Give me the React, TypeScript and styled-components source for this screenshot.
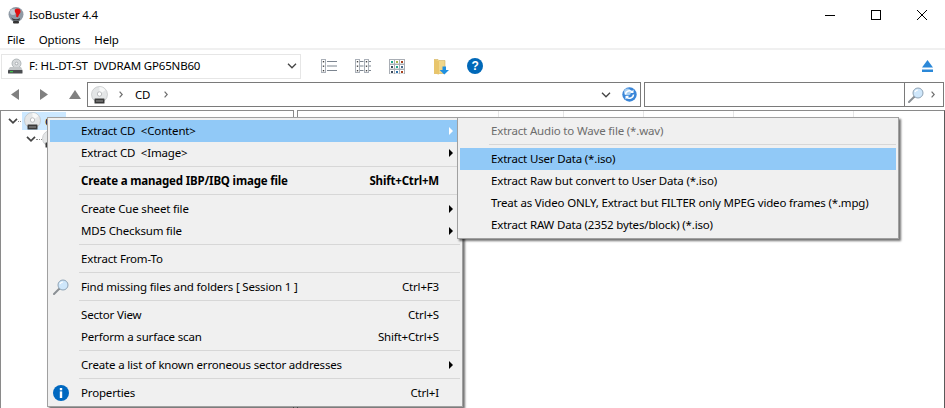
import styled, { createGlobalStyle } from "styled-components";

const GlobalStyle = createGlobalStyle`
  html, body { margin: 0; padding: 0; background: #fff; }
  body { font-family: "Noto Sans", "Open Sans", sans-serif; font-size: 11.5px; letter-spacing: -0.17px; color: #000; }
`;

// ── Window chrome ────────────────────────────────────────────────────────────

const Window = styled.div`
  position: relative;
  width: 945px;
  height: 408px;
  overflow: hidden;
  background: #fff;
  display: flex;
  flex-direction: column;
`;

const TitleBar = styled.div`
  height: 29px;
  display: flex;
  align-items: center;
  padding-left: 8px;
  flex-shrink: 0;
`;

const TitleText = styled.span`
  margin-left: 5px;
  flex: 1;
`;

const WinButton = styled.div`
  width: 46px;
  height: 29px;
  display: flex;
  align-items: center;
  justify-content: center;
`;

const MenuBar = styled.div`
  height: 21px;
  padding: 1px 0 0 7px;
  box-sizing: border-box;
  display: flex;
  align-items: center;
  gap: 14px;
  flex-shrink: 0;
  border-bottom: 2px solid #f0f0f0;
`;

const Toolbar = styled.div`
  height: 32px;
  display: flex;
  align-items: center;
  flex-shrink: 0;
  padding-left: 1px;
`;

const Combo = styled.div`
  width: 300px;
  height: 25px;
  box-sizing: border-box;
  border: 1px solid #e6e6e6;
  display: flex;
  align-items: center;
  padding: 0 3px 0 5px;
  gap: 6px;
  white-space: pre;
`;

const ComboText = styled.span`
  flex: 1;
  padding-bottom: 1px;
`;

const ToolIcons = styled.div`
  display: flex;
  align-items: center;
  margin-left: 20px;
`;

const ToolSlot = styled.div<{ $w: number }>`
  width: ${({ $w }) => $w}px;
  display: flex;
  align-items: center;
`;

const EjectSlot = styled.div`
  margin-left: auto;
  margin-right: 12px;
  display: flex;
`;

const AddressRow = styled.div`
  height: 25px;
  display: flex;
  align-items: stretch;
  flex-shrink: 0;
`;

const NavGroup = styled.div`
  width: 87px;
  display: flex;
  align-items: center;
  padding-left: 11px;
  box-sizing: border-box;
  gap: 21px;
`;

const AddressBox = styled.div`
  width: 554px;
  box-sizing: border-box;
  border: 1px solid #7a7a7a;
  display: flex;
  align-items: center;
  padding-left: 3px;
`;

const Crumb = styled.span<{ $lead?: boolean }>`
  display: flex;
  margin: 0 12px 0 ${({ $lead }) => ($lead ? 11 : 14)}px;
`;

const CrumbText = styled.span`
  padding-bottom: 1px;
`;

const AddressEnd = styled.div`
  margin-left: auto;
  margin-right: 3px;
  display: flex;
  align-items: center;
  gap: 11px;
`;

const SearchBox = styled.div`
  margin-left: 3px;
  width: 300px;
  box-sizing: border-box;
  border: 1px solid #7a7a7a;
  display: flex;
  justify-content: flex-end;
`;

const SearchTools = styled.div`
  width: 39px;
  border-left: 1px solid #7a7a7a;
  display: flex;
  align-items: center;
  padding-left: 3px;
  gap: 7px;
  box-sizing: border-box;
`;

// ── Panes ────────────────────────────────────────────────────────────────────

const Panes = styled.div`
  flex: 1;
  margin-top: 3px;
  display: flex;
  gap: 3px;
  min-height: 0;
`;

const TreePane = styled.div`
  width: 294px;
  box-sizing: border-box;
  border: 1px solid #8a8a8a;
  border-bottom: none;
  padding: 1px 0 0 7px;
`;

const TreeRow = styled.div<{ $indent?: number }>`
  height: 18px;
  display: flex;
  align-items: center;
  padding-left: ${({ $indent }) => $indent ?? 0}px;
`;

const TreeChevron = styled.div`
  width: 10px;
  display: flex;
  align-items: center;
`;

const TreeDots = styled.div<{ $w: number }>`
  width: ${({ $w }) => $w}px;
  border-top: 1px dotted #8a8a8a;
  margin-top: 1px;
`;

const TreeLabel = styled.div`
  display: flex;
  align-items: center;
  gap: 4px;
  height: 18px;
  padding: 0 6px 0 2px;
  background: #cce8ff;
  margin-left: 1px;
`;

const ListPane = styled.div`
  flex: 1;
  border-top: 1px solid #8a8a8a;
  border-right: 1px solid #5a5a5a;
  border-left: 1px solid #8a8a8a;
`;

const ColumnHeader = styled.div`
  display: flex;
  height: 20px;
`;

const Column = styled.div<{ $w: number }>`
  width: ${({ $w }) => $w}px;
  border-right: 1px solid #e5e5e5;
  box-sizing: border-box;
`;

// ── Context menus ────────────────────────────────────────────────────────────

const Popup = styled.div`
  position: absolute;
  box-sizing: border-box;
  background: #f0f0f0;
  border: 1px solid #a0a0a0;
  padding: 2px;
  box-shadow: 2px 2px 2px rgba(0, 0, 0, 0.55);
`;

const MainMenu = styled(Popup)`
  left: 47px;
  top: 117px;
  width: 416px;
  height: 290px;
`;

const SubMenu = styled(Popup)`
  left: 409px;
  top: -1px;
  width: 442px;
  height: 122px;
`;

const Item = styled.div<{ $active?: boolean; $disabled?: boolean; $bold?: boolean }>`
  height: 22px;
  display: flex;
  align-items: center;
  background: ${({ $active }) => ($active ? "#91c9f7" : "transparent")};
  color: ${({ $disabled }) => ($disabled ? "#6d6d6d" : "#000")};
  font-weight: ${({ $bold }) => ($bold ? 700 : 400)};
  white-space: pre;
`;

const Gutter = styled.div`
  width: 31px;
  flex-shrink: 0;
  display: flex;
  align-items: center;
  padding-left: 3px;
  box-sizing: border-box;
`;

const Label = styled.span`
  flex: 1;
  padding-bottom: 2px;
`;

const Shortcut = styled.span`
  margin-right: 21px;
  padding-bottom: 2px;
`;

const Arrow = styled.span<{ $light?: boolean }>`
  width: 0;
  height: 0;
  margin-right: 7px;
  border-top: 4px solid transparent;
  border-bottom: 4px solid transparent;
  border-left: 4px solid ${({ $light }) => ($light ? "#fff" : "#000")};
`;

const Separator = styled.div`
  height: 6px;
  margin-left: 29px;
  box-sizing: border-box;
  padding-top: 2px;
  &::before {
    content: "";
    display: block;
    height: 1px;
    background: #d7d7d7;
  }
`;

// ── Icons ────────────────────────────────────────────────────────────────────

const Logo = () => (
  <svg width="16" height="18" viewBox="0 0 16 18">
    <circle cx="8" cy="8.5" r="7.5" fill="#8f9aa5" />
    <circle cx="5" cy="6" r="3" fill="#c4ccd4" />
    <path d="M7 3.5c2-1.8 5-1 5.5 1.2.4 1.8-1 3.2-1.6 4.2l-1 2.3-1.8-.4.2-2.4C7.6 7.2 6 5 7 3.5z" fill="#e01010" />
    <path d="M3 11c2 2.5 6 3 9 1l-.6 2.5H5z" fill="#3c3c3c" />
    <rect x="5" y="15" width="6" height="2.5" rx="1" fill="#333" />
  </svg>
);

const Drive = () => (
  <svg width="16" height="16" viewBox="0 0 16 16">
    <ellipse cx="9.5" cy="5.5" rx="4.5" ry="4.5" fill="#d5d8da" stroke="#9aa0a4" strokeWidth="0.7" />
    <circle cx="9.5" cy="5.5" r="1.3" fill="#fff" stroke="#8a8f93" strokeWidth="0.6" />
    <path d="M3 9h11l1.5 3H1z" fill="#c3c6c8" />
    <rect x="1" y="12" width="14.5" height="3.5" rx="0.6" fill="#4a4d50" />
    <rect x="3" y="13" width="3" height="1.3" fill="#3fc24a" />
  </svg>
);

const Disc = () => (
  <svg width="17" height="18" viewBox="0 0 17 18">
    <circle cx="8.5" cy="8.5" r="8" fill="#e4e6e7" stroke="#b5b8ba" strokeWidth="0.6" />
    <path d="M8.5 1a7.5 7.5 0 0 1 6 3L8.5 8.5z" fill="#f7f8f8" />
    <circle cx="8.5" cy="8" r="2.2" fill="#fff" stroke="#a5a8aa" strokeWidth="0.7" />
    <rect x="3.5" y="12.5" width="10" height="5" rx="0.6" fill="#3a3a3a" />
    <rect x="5" y="14.5" width="7" height="1" fill="#9a9a9a" />
  </svg>
);

const Caret = ({ weight = 1.3 }: { weight?: number }) => (
  <svg width="10" height="6" viewBox="0 0 10 6">
    <path d="M1 .8 5 4.8 9 .8" fill="none" stroke="#444" strokeWidth={weight} />
  </svg>
);

const Crumbs = () => (
  <svg width="4" height="7" viewBox="0 0 4 7">
    <path d="M.6.6 3.2 3.5.6 6.4" fill="none" stroke="#6e6e6e" strokeWidth="1.2" />
  </svg>
);

const Back = () => (
  <svg width="8" height="11" viewBox="0 0 8 11"><path d="M8 0v11L0 5.5z" fill="#808080" /></svg>
);
const Forward = () => (
  <svg width="8" height="11" viewBox="0 0 8 11"><path d="M0 0v11l8-5.5z" fill="#808080" /></svg>
);
const Up = () => (
  <svg width="12" height="9" viewBox="0 0 12 9"><path d="M0 9h12L6 0z" fill="#808080" /></svg>
);

const ListView = () => (
  <svg width="16" height="14" viewBox="0 0 16 14">
    <rect x=".5" y=".5" width="4" height="13" fill="#fff" stroke="#aab0b8" />
    {[2, 6.5, 11].map((y) => (
      <g key={y}>
        <rect x="1.8" y={y} width="1.4" height="1.4" fill="#444" />
        <rect x="6" y={y} width="10" height="1" fill="#7c8590" />
      </g>
    ))}
  </svg>
);

const DetailView = () => (
  <svg width="16" height="14" viewBox="0 0 16 14">
    <rect x=".5" y=".5" width="4" height="13" fill="#fff" stroke="#aab0b8" />
    <rect x="9.5" y=".5" width="4" height="13" fill="#fff" stroke="#aab0b8" />
    {[2, 6.5, 11].map((y) => (
      <g key={y}>
        <rect x="1.8" y={y} width="1.4" height="1.4" fill="#444" />
        <rect x="5" y={y} width="3.5" height="1" fill="#7c8590" />
        <rect x="10.8" y={y} width="1.4" height="1.4" fill="#444" />
        <rect x="14" y={y} width="2" height="1" fill="#7c8590" />
      </g>
    ))}
  </svg>
);

const GRID_COLORS = ["#1fa58c", "#a6b34a", "#a8421f", "#3a4a5c", "#1fa58c", "#4a6a8a", "#3a4a5c", "#2a6fa8", "#a8421f"];

const GridView = () => (
  <svg width="16" height="15" viewBox="0 0 16 15">
    {GRID_COLORS.map((c, i) => (
      <g key={i}>
        <rect x={0.5 + (i % 3) * 5} y={0.5 + Math.floor(i / 3) * 5} width="5" height="4.6" fill="#fff" stroke="#a9aeb5" />
        <rect x={2 + (i % 3) * 5} y={2 + Math.floor(i / 3) * 5} width="2" height="2" fill={c} />
      </g>
    ))}
  </svg>
);

const FolderDown = () => (
  <svg width="16" height="17" viewBox="0 0 16 17">
    <path d="M0 1.5h4l1 1h6v13H0z" fill="#f0d68a" stroke="#d0b060" strokeWidth="0.6" />
    <path d="M0 1.5 5 3v13.5L0 15.5z" fill="#e8c56c" />
    <path d="M8.5 8.5h3.5v3.5h3l-4.7 4.5L5.6 12h2.9z" fill="#1f8fe0" />
  </svg>
);

const Help = () => (
  <svg width="16" height="16" viewBox="0 0 16 16">
    <circle cx="8" cy="8" r="8" fill="#0068b8" />
    <text x="8" y="12.2" textAnchor="middle" fontSize="12" fontWeight="700" fontFamily="Liberation Sans, sans-serif" fill="#fff">?</text>
  </svg>
);

const Eject = () => (
  <svg width="11" height="12" viewBox="0 0 11 12">
    <path d="M0 7.5 5.5 0 11 7.5z" fill="#2b88d8" />
    <rect y="9.5" width="11" height="2.5" fill="#2b88d8" />
  </svg>
);

const Refresh = () => (
  <svg width="15" height="15" viewBox="0 0 15 15">
    <circle cx="7.5" cy="7.5" r="7.2" fill="#3a86d8" />
    <circle cx="5.5" cy="5" r="3.5" fill="#a9cff2" />
    <path d="M3.5 7.5a4 4 0 0 1 7-2.4M11.5 7.5a4 4 0 0 1-7 2.4" fill="none" stroke="#fff" strokeWidth="1.5" />
    <path d="M11.5 2.5v3.5H8zM3.5 12.5V9H7z" fill="#fff" />
  </svg>
);

const Magnifier = () => (
  <svg width="16" height="16" viewBox="0 0 16 16">
    <path d="M6.5 9.5 1 15" stroke="#8a8f94" strokeWidth="2" strokeLinecap="round" />
    <circle cx="10" cy="6" r="5" fill="#cfe7fb" stroke="#8fa3b5" />
    <path d="M7 5a3.2 3.2 0 0 1 3-2" fill="none" stroke="#fff" strokeWidth="1.2" />
  </svg>
);

const Info = () => (
  <svg width="16" height="16" viewBox="0 0 16 16">
    <circle cx="8" cy="8" r="8" fill="#0068c0" />
    <rect x="6.8" y="3" width="2.4" height="2.3" fill="#fff" />
    <rect x="6.8" y="6.4" width="2.4" height="6.6" fill="#fff" />
  </svg>
);

const Minimize = () => (
  <svg width="10" height="10" viewBox="0 0 10 10"><path d="M0 5.5h10" stroke="#000" /></svg>
);
const Maximize = () => (
  <svg width="10" height="10" viewBox="0 0 10 10"><rect x=".5" y=".5" width="9" height="9" fill="none" stroke="#000" /></svg>
);
const Close = () => (
  <svg width="10" height="10" viewBox="0 0 10 10"><path d="M0 0l10 10M10 0 0 10" stroke="#000" /></svg>
);

// ── Data ─────────────────────────────────────────────────────────────────────

const COLUMNS = [201, 65, 80, 90, 120];

export default function App() {
  return (
    <Window>
      <GlobalStyle />

      <TitleBar>
        <Logo />
        <TitleText>IsoBuster 4.4</TitleText>
        <WinButton><Minimize /></WinButton>
        <WinButton><Maximize /></WinButton>
        <WinButton><Close /></WinButton>
      </TitleBar>

      <MenuBar>
        <span>File</span>
        <span>Options</span>
        <span>Help</span>
      </MenuBar>

      <Toolbar>
        <Combo>
          <Drive />
          <ComboText>F: HL-DT-ST  DVDRAM GP65NB60</ComboText>
          <Caret />
        </Combo>
        <ToolIcons>
          <ToolSlot $w={34}><ListView /></ToolSlot>
          <ToolSlot $w={34}><DetailView /></ToolSlot>
          <ToolSlot $w={45}><GridView /></ToolSlot>
          <ToolSlot $w={33}><FolderDown /></ToolSlot>
          <ToolSlot $w={16}><Help /></ToolSlot>
        </ToolIcons>
        <EjectSlot><Eject /></EjectSlot>
      </Toolbar>

      <AddressRow>
        <NavGroup>
          <Back />
          <Forward />
          <Up />
        </NavGroup>
        <AddressBox>
          <Disc />
          <Crumb $lead><Crumbs /></Crumb>
          <CrumbText>CD</CrumbText>
          <Crumb><Crumbs /></Crumb>
          <AddressEnd>
            <Caret />
            <Refresh />
          </AddressEnd>
        </AddressBox>
        <SearchBox>
          <SearchTools>
            <Magnifier />
            <Crumbs />
          </SearchTools>
        </SearchBox>
      </AddressRow>

      <Panes>
        <TreePane>
          <TreeRow>
            <TreeChevron><Caret weight={1.7} /></TreeChevron>
            <TreeDots $w={3} />
            <TreeLabel>
              <Disc />
              <span>CD</span>
            </TreeLabel>
          </TreeRow>
          <TreeRow $indent={18}>
            <TreeChevron><Caret weight={1.7} /></TreeChevron>
            <TreeDots $w={6} />
            <Disc />
          </TreeRow>
        </TreePane>
        <ListPane>
          <ColumnHeader>
            {COLUMNS.map((w) => (
              <Column key={w} $w={w} />
            ))}
          </ColumnHeader>
        </ListPane>
      </Panes>

      <MainMenu>
        <Item $active>
          <Gutter />
          <Label>Extract CD  &lt;Content&gt;</Label>
          <Arrow $light />
        </Item>
        <Item>
          <Gutter />
          <Label>Extract CD  &lt;Image&gt;</Label>
          <Arrow />
        </Item>
        <Separator />
        <Item $bold>
          <Gutter />
          <Label>Create a managed IBP/IBQ image file</Label>
          <Shortcut>Shift+Ctrl+M</Shortcut>
        </Item>
        <Separator />
        <Item>
          <Gutter />
          <Label>Create Cue sheet file</Label>
          <Arrow />
        </Item>
        <Item>
          <Gutter />
          <Label>MD5 Checksum file</Label>
          <Arrow />
        </Item>
        <Separator />
        <Item>
          <Gutter />
          <Label>Extract From-To</Label>
        </Item>
        <Separator />
        <Item>
          <Gutter><Magnifier /></Gutter>
          <Label>Find missing files and folders [ Session 1 ]</Label>
          <Shortcut>Ctrl+F3</Shortcut>
        </Item>
        <Separator />
        <Item>
          <Gutter />
          <Label>Sector View</Label>
          <Shortcut>Ctrl+S</Shortcut>
        </Item>
        <Item>
          <Gutter />
          <Label>Perform a surface scan</Label>
          <Shortcut>Shift+Ctrl+S</Shortcut>
        </Item>
        <Separator />
        <Item>
          <Gutter />
          <Label>Create a list of known erroneous sector addresses</Label>
          <Arrow />
        </Item>
        <Separator />
        <Item>
          <Gutter><Info /></Gutter>
          <Label>Properties</Label>
          <Shortcut>Ctrl+I</Shortcut>
        </Item>

        <SubMenu>
          <Item $disabled>
            <Gutter />
            <Label>Extract Audio to Wave file (*.wav)</Label>
          </Item>
          <Separator />
          <Item $active>
            <Gutter />
            <Label>Extract User Data (*.iso)</Label>
          </Item>
          <Item>
            <Gutter />
            <Label>Extract Raw but convert to User Data (*.iso)</Label>
          </Item>
          <Item>
            <Gutter />
            <Label>Treat as Video ONLY, Extract but FILTER only MPEG video frames (*.mpg)</Label>
          </Item>
          <Item>
            <Gutter />
            <Label>Extract RAW Data (2352 bytes/block) (*.iso)</Label>
          </Item>
        </SubMenu>
      </MainMenu>
    </Window>
  );
}
